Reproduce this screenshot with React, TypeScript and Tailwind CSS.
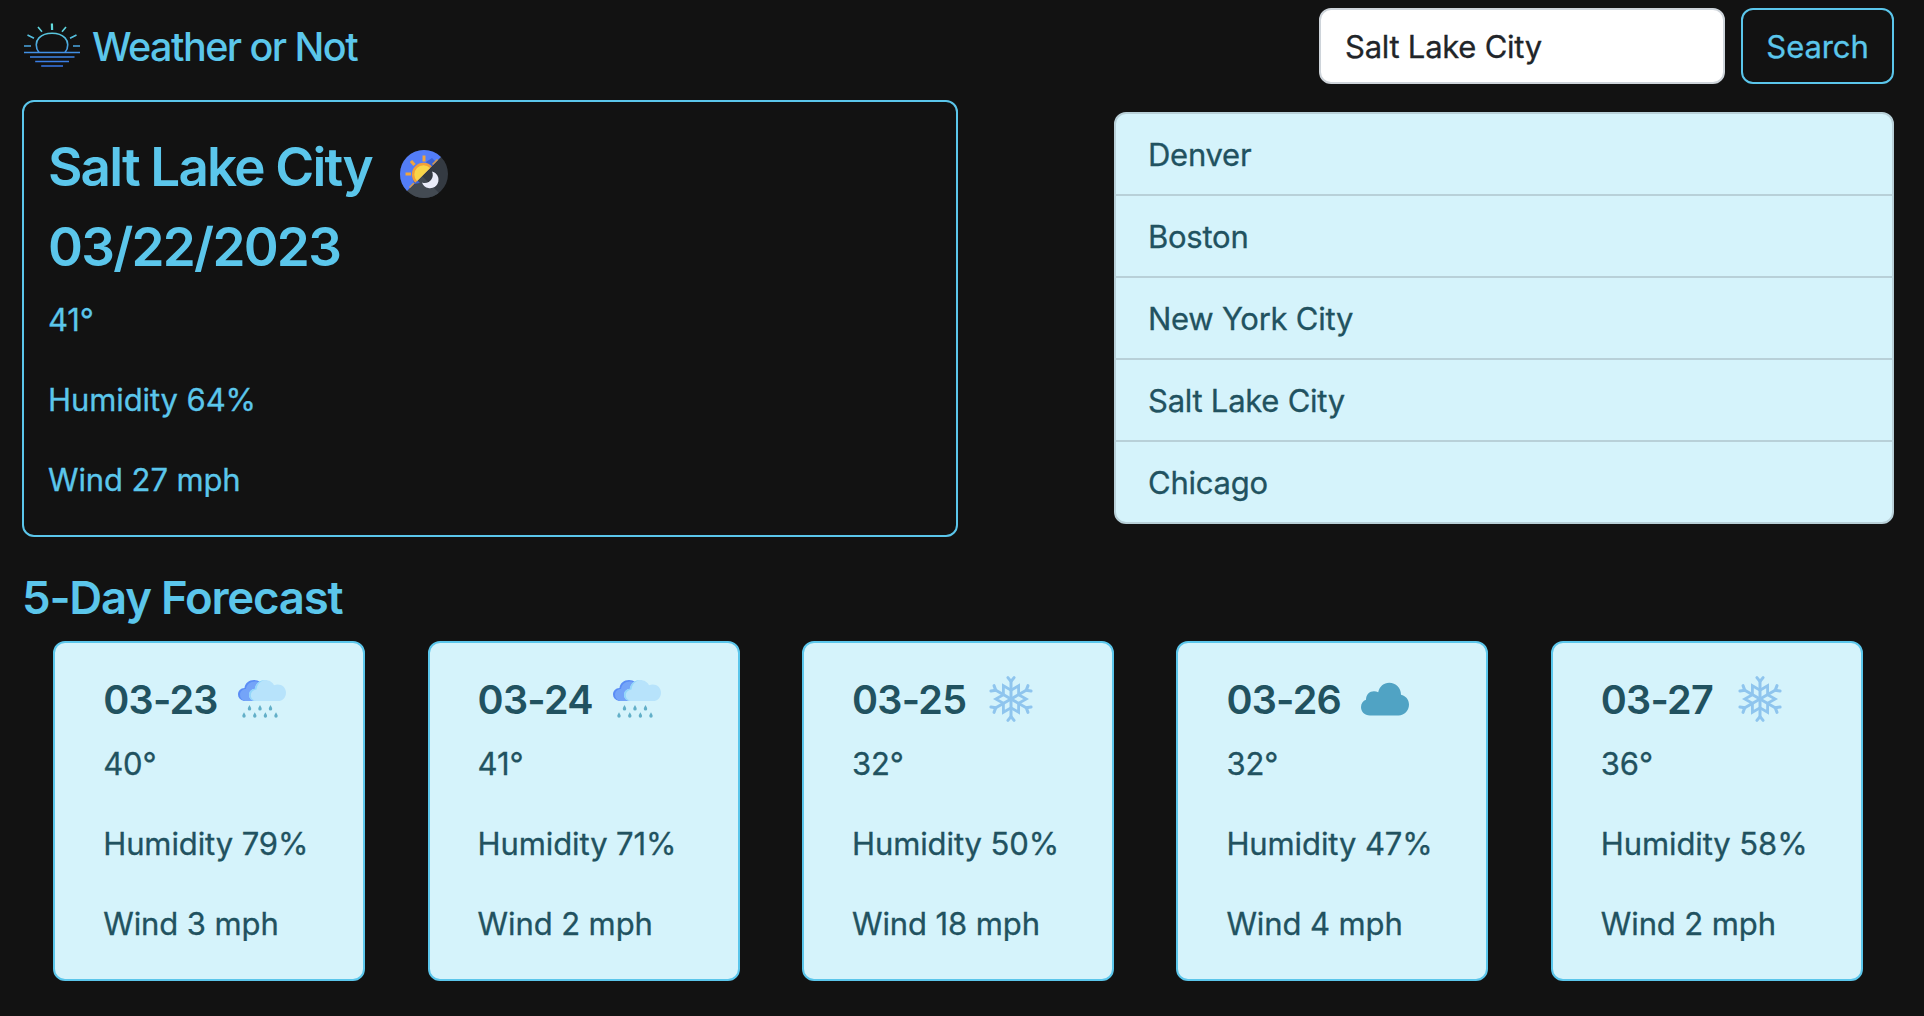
import React from "react";

const SunriseLogo = () => (
  <svg className="h-[46px] w-[58px] shrink-0" viewBox="0 0 58 46" fill="none">
    <defs>
      <linearGradient id="horizon" x1="0" y1="0" x2="0" y2="46" gradientUnits="userSpaceOnUse">
        <stop offset="0" stopColor="#65e2dc" />
        <stop offset="0.5" stopColor="#4aa6e0" />
        <stop offset="0.68" stopColor="#3f8ae6" />
        <stop offset="1" stopColor="#3471e6" />
      </linearGradient>
    </defs>
    <g stroke="url(#horizon)" strokeWidth="1.6">
      <path d="M16 29.500C12.100 24.500 12.600 18.500 16 14.900C19.300 11.500 24 10.200 29 10.200S38.700 11.500 42 14.900C45.400 18.500 45.900 24.500 42 29.500" />
      <path d="M1 29.500H57M7 34H51.500M12.200 38.500H46M18.200 43H40" />
      <path d="M15 4L19 8.800M43 4L39 8.800M4.500 12L11 15.300M53.500 12L47 15.300M1 23H8M50 23H57" />
      <path d="M28.900 .5L29.100 7" strokeWidth="2.200" />
    </g>
  </svg>
);

const DayNight = ({ className }: { className?: string }) => (
  <svg className={className} viewBox="0 0 48 48">
    <defs>
      <clipPath id="disc"><circle cx="24" cy="24" r="24" /></clipPath>
    </defs>
    <g clipPath="url(#disc)">
      <rect width="48" height="48" fill="#343a42" />
      <path d="M7 41L22 26L43 47L20 50Z" fill="#434a52" />
      <path d="M0 0H48L0 48Z" fill="#537df7" />
      <path d="M12 25L20 33L14 34Z M26 12L32 8L36 12L30 18Z" fill="#3a63d6" />
      <path d="M15.300 32.700A11.300 11.300 0 0 1 31.800 16.200Z" fill="#f19f3a" />
      <path d="M17 31A8.300 8.300 0 0 1 30 18Z" fill="#f8d548" />
      <g stroke="#f1a53c" strokeWidth="3"><path d="M24 5.500V11.500M11 11L14.500 15M5.500 24H11" /></g>
      <path d="M37.500 9.500L32.500 14.500M14 33L9.500 37.500" stroke="#d99a48" strokeWidth="1.500" />
      <path d="M32 21.500A8.500 8.500 0 1 1 22 32.500C29 35 35 28 32 21.500Z" fill="#e9ebf8" />
    </g>
  </svg>
);

const Rain = () => (
  <svg className="size-12" viewBox="0 0 48 48">
    <path d="M15 26H6C2 25 0 22.500 0 19.500C0 16 2.500 13 6.500 13C7 8 11 5 16 5C18.500 5 20.500 5.700 22 7Z" fill="#5b8df5" />
    <path d="M15 26H7C3.500 25 2 22.500 2 19.500C2 16.500 4.500 14 8 14C8.500 9.500 12 6.500 17 6.500C19 6.500 20.500 7 22 8Z" fill="#74a4f8" />
    <path d="M18 26C13.500 26 11 23.200 11 20C11 16.500 13.500 14 17 13.700C17.500 8.500 21.500 5 27 5C31.300 5 34.500 7.200 36 10.200C42.500 8 48 12 48 17.700C48 22.500 44.500 26 40 26Z" fill="#b7e3fb" />
    <path d="M18 26C13.500 26 11 23.200 11 20C11 16.500 13.500 14 17 13.700C17.500 8.500 21.500 5 27 5C22 6 19 9.500 18.500 14.500C15 15 12.800 17 12.800 20.500C12.800 23.500 15.500 25.500 18 26Z" fill="#92d6fa" />
    {[[11.5, 30], [22, 30], [32.5, 30], [6, 37.2], [16.8, 37.2], [27.4, 37.2], [38, 37.2]].map(([x, y]) => (
      <path key={`${x}-${y}`} transform={`translate(${x} ${y})`} d="M0 0C1 1.800 1.700 2.800 1.700 3.900A1.700 1.700 0 0 1 -1.700 3.900C-1.700 2.800 -1 1.800 0 0Z" fill="#62afc8" />
    ))}
  </svg>
);

const Snow = () => (
  <svg className="size-12" viewBox="0 0 48 48" fill="none" stroke="#8fc5ee" strokeWidth="3">
    {[0, 60, 120, 180, 240, 300].map((a) => (
      <g key={a} transform={`rotate(${a} 24 24)`}>
        <path d="M24 24V4" />
        <path d="M20.900 2.600L24 6.400L27.100 2.600" strokeLinecap="round" />
      </g>
    ))}
    <path
      d="M24 15.200L31.600 10.800V19.600L39.200 24L31.600 28.400V37.200L24 32.800L16.400 37.200V28.400L8.800 24L16.400 19.600V10.800Z"
      strokeWidth="2.8"
    />
  </svg>
);

const Cloud = () => (
  <svg className="size-12" viewBox="0 0 48 48">
    <path d="M9 40.500C3.500 40.500 0 36.500 0 32C0 28.500 2 25.800 5 24.700C5 19.500 8.500 16.200 13 16.200C14.500 16.200 16 16.500 17.200 17.200C18.500 11.500 22.800 7.700 28.200 7.700C35 7.700 40 13 40 19.700C44.500 20.500 48 24.500 48 29.600C48 35.500 43.500 40.500 37.500 40.500Z" fill="#50a3c4" />
  </svg>
);

const cities = ["Denver", "Boston", "New York City", "Salt Lake City", "Chicago"];
const forecast = [
  { date: "03-23", Icon: Rain, temp: 40, humidity: 79, wind: 3 },
  { date: "03-24", Icon: Rain, temp: 41, humidity: 71, wind: 2 },
  { date: "03-25", Icon: Snow, temp: 32, humidity: 50, wind: 18 },
  { date: "03-26", Icon: Cloud, temp: 32, humidity: 47, wind: 4 },
  { date: "03-27", Icon: Snow, temp: 36, humidity: 58, wind: 2 },
];

export default function App() {
  return (
    <div className="h-[1016px] overflow-hidden bg-[#121212] px-[22px] font-[Inter,sans-serif] text-[31px] leading-[48px] tracking-[-0.1px] text-[#5bc6eb] [-webkit-text-stroke:0.3px]">
      <header className="flex h-[100px] items-start justify-between pt-2 pr-2">
        <div className="flex h-[76px] items-center pl-[1px]">
          <SunriseLogo />
          <span className="ml-[11px] pt-0.5 text-[39.5px] font-medium tracking-[-1.55px] [-webkit-text-stroke:0px]">Weather or Not</span>
        </div>
        <form className="flex gap-4">
          <input className="h-[76px] w-[406px] rounded-xl border-2 border-[#ced4da] bg-white px-6 tracking-[-0.25px] text-[#212529] outline-none" defaultValue="Salt Lake City" />
          <button type="button" className="h-[76px] w-[153px] rounded-xl border-2 border-[#5bc6eb] pt-0.5">Search</button>
        </form>
      </header>
      <main className="flex items-start justify-between pr-2">
        <section className="h-[437px] w-[936px] rounded-xl border-2 border-[#5bc6eb] px-6 pt-[25px]">
          <h2 className="flex h-20 items-center text-[53px] font-semibold tracking-[-1.85px] [-webkit-text-stroke:0px]">Salt Lake City<DayNight className="mt-[13px] ml-7 size-12" /></h2>
          <h2 className="flex h-20 items-center text-[53px] font-semibold tracking-[-1.75px] [-webkit-text-stroke:0px]">03/22/2023</h2>
          <p className="h-20 pt-[9px]">41°</p>
          <p className="h-20 pt-[9px]">Humidity 64%</p>
          <p className="h-20 pt-[9px]">Wind 27 mph</p>
        </section>
        <ul className="mt-3 w-[780px] divide-y-2 divide-[#b8d0d8] overflow-hidden rounded-xl border-2 border-[#b8d0d8] bg-[#d5f3fb] tracking-[-0.25px] text-[#215260]">
          {cities.map((c) => <li key={c} className="h-[82px] px-8 pt-[17px] last:h-20">{c}</li>)}
        </ul>
      </main>
      <h3 className="mt-[33px] flex h-[56px] items-center text-[45.5px] font-semibold tracking-[-1.22px] [-webkit-text-stroke:0px]">5-Day Forecast</h3>
      <div className="mt-[15px] grid w-[1872px] grid-cols-5">
        {forecast.map(({ date, Icon, temp, humidity, wind }) => (
          <article key={date} className="mx-[31.2px] h-[340px] rounded-xl border-2 border-[#5bc6eb] bg-[#d5f3fb] px-12 pt-8 text-[#215260]">
            <h4 className="flex h-12 items-center text-[39.5px] font-semibold tracking-[-0.75px] [-webkit-text-stroke:0px]">
              <span className="w-[135px] pt-0.5">{date}</span>
              <Icon />
            </h4>
            <p className="h-20 pt-[17px]">{temp}°</p>
            <p className="h-20 pt-[17px]">Humidity {humidity}%</p>
            <p className="h-20 pt-[17px]">Wind {wind} mph</p>
          </article>
        ))}
      </div>
    </div>
  );
}
